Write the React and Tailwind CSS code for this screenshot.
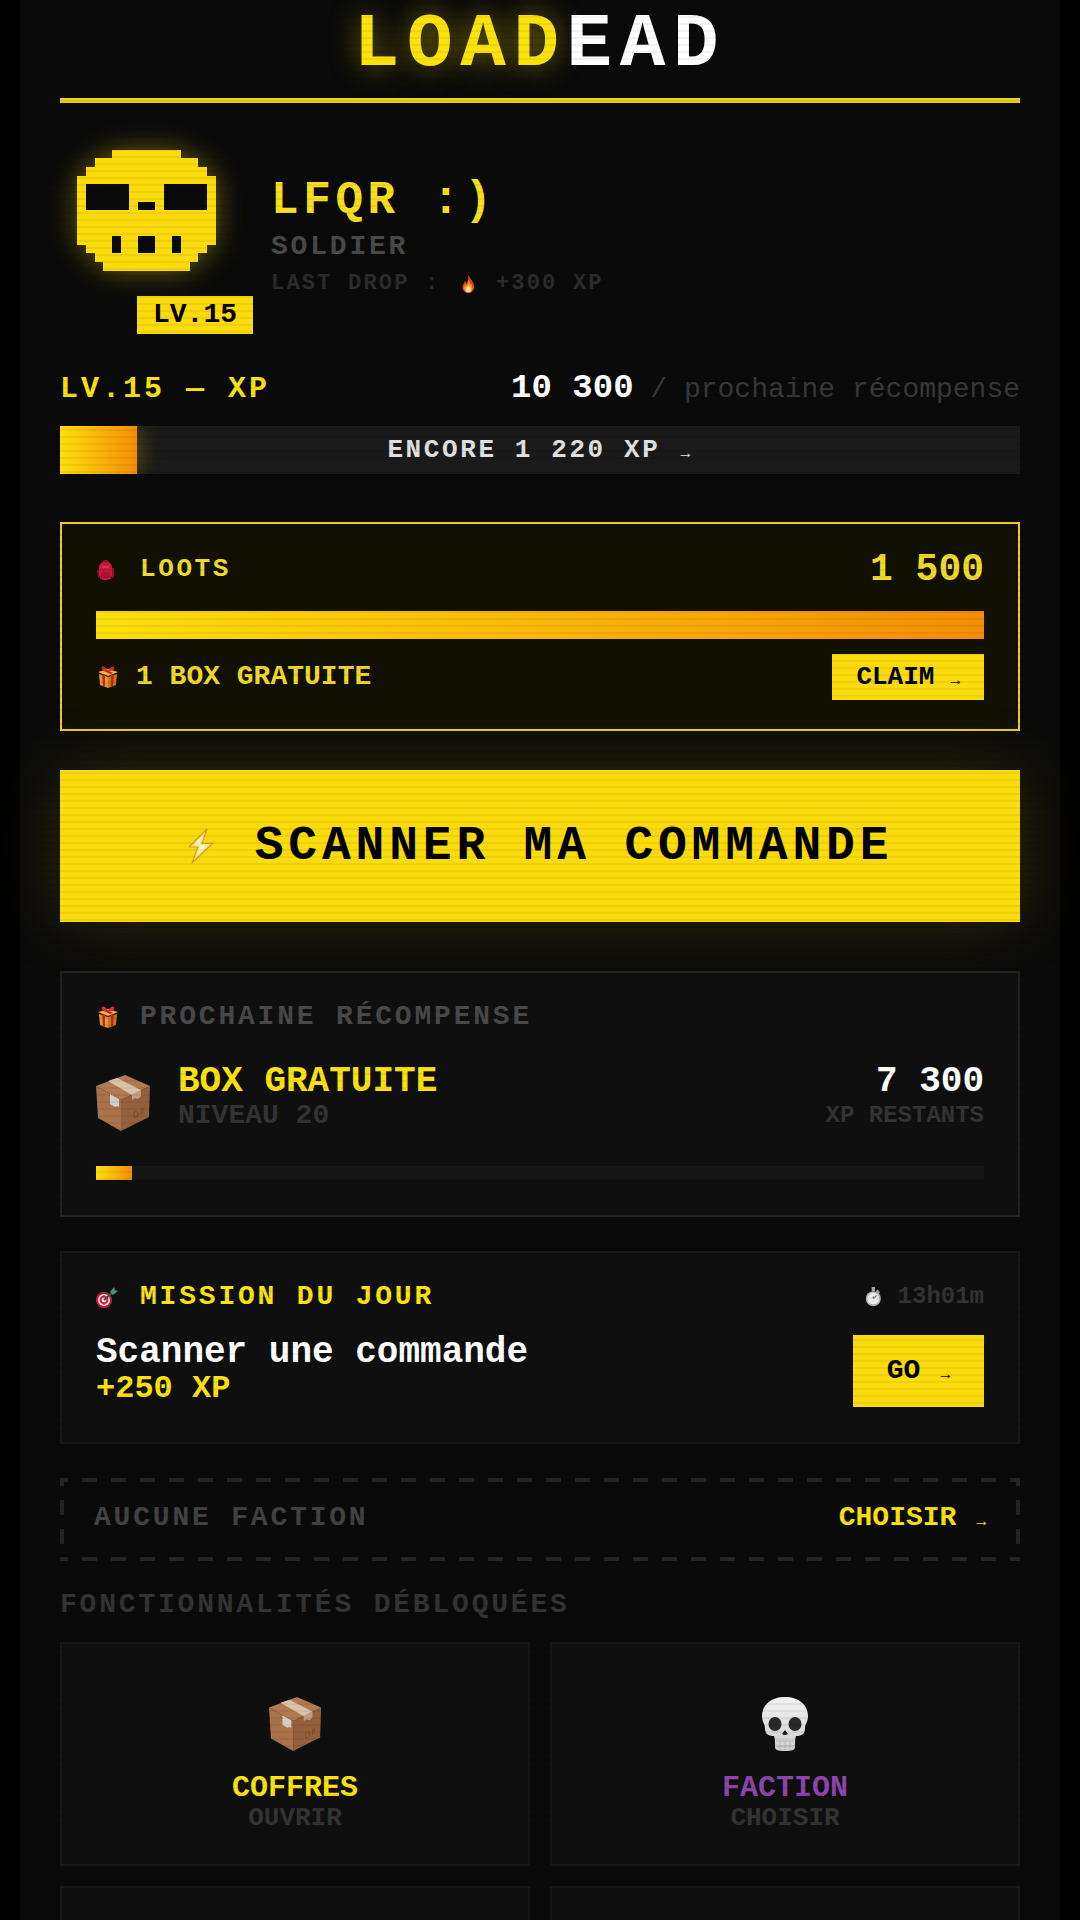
const features = [
    { id: 'coffres', label: 'COFFRES', action: 'OUVRIR', icon: BoxIcon, color: 'text-[#fbe20c]' },
    { id: 'faction', label: 'FACTION', action: 'CHOISIR', icon: SkullIcon, color: 'text-[#8e44ad]' },
];

function PixelSkull() {
    return (
        <svg viewBox="0 0 20 20" className="w-full h-full overflow-visible drop-shadow-[0_0_14px_rgba(250,220,10,0.4)]" shapeRendering="crispEdges" aria-hidden="true">
            <g transform="translate(2 1)">
                <path fill="#fadb0b" d="M4 0h8v1h2v1h1v1h1v8h-1v1h-1v1h-1v1H3v-1H2v-1H1v-1H0V3h1V2h1V1h2z" />
                <path fill="#0a0a0a" d="M1 4h5v3H1zM10 4h5v3h-5zM7 6h2v1H7zM4 10h1v2H4zM7 10h2v2H7zM11 10h1v2h-1z" />
            </g>
        </svg>
    );
}

function FireIcon({ className }) {
    return (
        <svg viewBox="0 0 20 24" className={className} aria-hidden="true">
            <path fill="#e8431c" d="M10 1c1 4 7 8 7 15 0 4-3 7-7 7s-7-3-7-7c0-3 2-5 3-8l2 3c2-3 2-6 2-10z" />
            <path fill="#ff9d1e" d="M10 7c1 4 5 6 5 10 0 3-2 5-5 5s-5-2-5-5c0-2 1-3 2-5l1 2c2-2 2-4 2-7z" />
            <path fill="#fff0b0" d="M10 14c1 2 3 3 3 5s-1 3-3 3-3-1-3-3 2-3 3-5z" />
        </svg>
    );
}

function BagIcon({ className }) {
    return (
        <svg viewBox="0 0 24 24" className={className} aria-hidden="true">
            <path fill="none" stroke="#8f1028" strokeWidth="2" d="M7 7V5a3 3 0 0 1 5 0v2" />
            <rect x="3" y="5" width="13" height="18" rx="5" fill="#c8173a" />
            <path fill="#8f1028" d="M1 13h2v8H2zM16 11h2v10h-2z" />
            <path fill="#a8142f" d="M5 15h9v6H5z" />
            <path fill="#e0304f" d="M6 9h7v2H6z" />
        </svg>
    );
}

function GiftIcon({ className }) {
    return (
        <svg viewBox="0 0 24 24" className={className} aria-hidden="true">
            <path fill="#e09a22" d="M3 9l9 3v11l-8-3z" />
            <path fill="#c47a14" d="M21 9l-9 3v11l8-3z" />
            <path fill="#f1b640" d="M2 7l10-3 10 3-10 4z" />
            <path fill="#c91f2b" d="M6 9l3 1v12l-2-1zM15 10l3-1-1 12-2 1zM6 5l3-1 8 4-3 1z" />
            <path fill="#e02a36" d="M12 6C9 0 4 1 6 4c1 2 4 2 6 2zM12 6c3-6 8-5 6-2-1 2-4 2-6 2z" />
        </svg>
    );
}

function BoltIcon({ className }) {
    return (
        <svg viewBox="0 0 28 36" className={className} aria-hidden="true">
            <path fill="#fbe38a" stroke="#dd9a1c" strokeWidth="1.2" strokeLinejoin="round" d="M20 1L2 19l9 0L5 35l21-20-11 1z" />
            <path fill="#fff6d0" d="M17 6L7 17l7-1-4 11 11-11-9 1z" />
        </svg>
    );
}

function TargetIcon({ className }) {
    return (
        <svg viewBox="0 0 24 24" className={className} aria-hidden="true">
            <circle cx="8" cy="15" r="8" fill="#c9203a" />
            <circle cx="8" cy="15" r="6" fill="#f1dede" />
            <circle cx="8" cy="15" r="4.4" fill="#c9203a" />
            <circle cx="8" cy="15" r="2.4" fill="#f1dede" />
            <path stroke="#3c4a48" strokeWidth="1.8" d="M8 15l9-8" />
            <path fill="#3f9a85" d="M14 7l4-5 1 3 3 1-5 4z" />
        </svg>
    );
}

function TimerIcon({ className }) {
    return (
        <svg viewBox="0 0 20 24" className={className} aria-hidden="true">
            <path fill="#a9a9a9" d="M8 0h4v5H8zM15 3l3 3-2 2-3-3z" />
            <circle cx="10" cy="14" r="9" fill="#b5b5b5" />
            <circle cx="10" cy="14" r="7" fill="#ececec" />
            <path stroke="#777" strokeWidth="1.4" fill="none" d="M10 14l4-4M10 14v-3" />
        </svg>
    );
}

function BoxIcon({ className }) {
    return (
        <svg viewBox="0 0 54 58" className={className} aria-hidden="true">
            <path fill="#a9724a" d="M0 12l25 14v31L2 44z" />
            <path fill="#94603b" d="M54 12L25 26v31l28-14z" />
            <path fill="#b07a52" d="M0 12L29 1l25 11-29 14z" />
            <path fill="#dcc3a8" d="M12 7l9-3 24 12-9 5z" />
            <path fill="#bda085" d="M36 21l9-5v6l-3 3-3-1-3 2z" />
            <path fill="#d6cdc3" d="M14 20l9 5v8l-2-1-2 1-5-3z" />
            <path fill="none" stroke="#7f4c2b" strokeWidth="1" d="M38 44v-5l2-2 2 1v4zM45 40v-5l2-1v5z" />
        </svg>
    );
}

function SkullIcon({ className }) {
    return (
        <svg viewBox="0 0 46 56" className={className} aria-hidden="true">
            <defs>
                <linearGradient id="bone" x1="0" y1="0" x2="0" y2="1">
                    <stop offset="0" stopColor="#f2f2f2" />
                    <stop offset="1" stopColor="#cfcfcf" />
                </linearGradient>
            </defs>
            <path fill="url(#bone)" d="M23 1C9 1 0 9 0 20c0 6 3 8 3 12 0 6 3 8 9 8 1 3 1 6 1 11 0 3 3 4 10 4s10-1 10-4c0-5 0-8 1-11 6 0 9-2 9-8 0-4 3-6 3-12C46 9 37 1 23 1z" />
            <ellipse cx="13" cy="28" rx="6.5" ry="7" fill="#2c2728" />
            <ellipse cx="33" cy="28" rx="6.5" ry="7" fill="#2c2728" />
            <path fill="#1c1818" d="M23 34l3 4-2 1h-2l-2-1z" />
            <path fill="none" stroke="#b4b4b4" strokeWidth="0.8" d="M14 45h18M14 50h18M18 45v8M23 45v9M28 45v8" />
        </svg>
    );
}

function Arrow() {
    return <span className="pt-2 text-base font-normal leading-none">→</span>;
}

function ProgressBar({ value, label, className, fillClassName = '' }) {
    return (
        <div role="progressbar" aria-label={label} aria-valuenow={value} aria-valuemin={0} aria-valuemax={100} className={`overflow-hidden ${className}`}>
            <div
                className={`h-full bg-linear-to-r from-[#fbe00c] to-[#f48c06] ${fillClassName}`}
                style={{ width: `${value}%` }}
            />
        </div>
    );
}

export default function App() {
    return (
        <div className="h-screen overflow-y-auto bg-black font-['Liberation_Mono',monospace] font-bold [scrollbar-width:none]">
            <main className="mx-5 px-10 bg-[#0a0a0a]">
                <header className="pb-2 border-b-[5px] border-[#ead01c] text-center">
                    <h1 className="text-[76px] leading-[90px] tracking-widest text-white">
                        <span className="text-[#fbe20c] [text-shadow:0_0_28px_rgba(250,220,10,0.5)]">LOAD</span>EAD
                    </h1>
                </header>

                <section className="flex gap-[38px] pt-[38px]">
                    <div className="relative shrink-0 size-[173px]">
                        <PixelSkull />
                        <span className="absolute -bottom-5 -right-5 px-4 bg-[#fadb0b] text-black text-[28px] leading-[38px]">LV.15</span>
                    </div>
                    <div className="pt-8">
                        <h2 className="text-[46px] leading-[56px] tracking-widest text-[#f5df1c]">LFQR :)</h2>
                        <p className="text-[28px] leading-9 tracking-widest text-[#484848]">SOLDIER</p>
                        <p className="flex items-center text-[22px] leading-[38px] tracking-widest text-[#2c2c2c] whitespace-pre">
                            LAST DROP : <FireIcon className="h-5 mx-1" /> +300 XP
                        </p>
                    </div>
                </section>

                <section className="pt-[54px]">
                    <div className="flex justify-between items-baseline leading-10">
                        <span className="text-[30px] tracking-widest text-[#fbe20c]">LV.15 — XP</span>
                        <span className="text-[28px] font-normal text-[#383838]">
                            <strong className="text-[34px] font-bold text-white">10 300</strong> / prochaine récompense
                        </span>
                    </div>
                    <div className="relative mt-4">
                        <ProgressBar
                            value={8}
                            label="XP"
                            className="h-12 bg-[#1a1a1a]"
                            fillClassName="shadow-[0_0_24px_rgba(250,220,10,0.35)]"
                        />
                        <p className="absolute inset-0 flex items-center justify-center gap-5 text-[26px] tracking-widest text-[#e0e0e0]">
                            ENCORE 1 220 XP <Arrow />
                        </p>
                    </div>
                </section>

                <section className="mt-12 px-[34px] py-[29px] border-2 border-[#ead01c] bg-[#121002]">
                    <div className="flex items-center justify-between h-8 text-[#f0da28]">
                        <h3 className="flex items-center gap-5 text-[26px] tracking-widest">
                            <BagIcon className="size-6" />LOOTS
                        </h3>
                        <span className="text-[38px]">1 500</span>
                    </div>
                    <ProgressBar value={100} label="Loots" className="mt-[26px] h-7" />
                    <div className="flex items-center justify-between mt-[15px]">
                        <p className="flex items-center gap-4 text-[28px] text-[#f0da28]">
                            <GiftIcon className="size-6" />1 BOX GRATUITE
                        </p>
                        <button type="button" className="flex items-center gap-4 h-[46px] px-6 bg-[#fadb0b] text-black text-[26px] cursor-pointer">
                            CLAIM <Arrow />
                        </button>
                    </div>
                </section>

                <button
                    type="button"
                    className="flex items-center justify-center gap-10 w-full h-[152px] mt-[39px] bg-[#fadb0b] text-black text-[48px] tracking-widest shadow-[0_0_70px_rgba(250,220,10,0.16)] cursor-pointer"
                >
                    <BoltIcon className="h-9" />SCANNER MA COMMANDE
                </button>

                <section className="mt-[49px] px-[34px] pt-7 pb-[35px] border-2 border-[#222222] bg-[#0f0f0f]">
                    <h3 className="flex items-center gap-5 h-8 text-[28px] tracking-widest text-[#484848]">
                        <GiftIcon className="size-6" />PROCHAINE RÉCOMPENSE
                    </h3>
                    <div className="flex items-end justify-between mt-[31px]">
                        <div className="flex items-end gap-7">
                            <BoxIcon className="h-[58px]" />
                            <div>
                                <p className="text-4xl leading-9 text-[#fbe20c]">BOX GRATUITE</p>
                                <p className="text-[28px] leading-8 text-[#333333]">NIVEAU 20</p>
                            </div>
                        </div>
                        <div className="text-right">
                            <p className="text-4xl leading-9 text-white">7 300</p>
                            <p className="text-2xl leading-8 text-[#333333]">XP RESTANTS</p>
                        </div>
                    </div>
                    <ProgressBar value={4} label="Prochaine récompense" className="mt-[34px] h-[14px] bg-[#171717]" />
                </section>

                <section className="mt-[34px] px-[34px] pt-7 pb-[35px] border-2 border-[#191919] bg-[#0f0f0f]">
                    <div className="flex items-center justify-between h-8">
                        <h3 className="flex items-center gap-5 text-[28px] tracking-widest text-[#fbe20c]">
                            <TargetIcon className="size-6" />MISSION DU JOUR
                        </h3>
                        <span className="flex items-center gap-4 text-2xl text-[#333333]">
                            <TimerIcon className="h-5" />13h01m
                        </span>
                    </div>
                    <div className="flex items-center justify-between mt-[22px]">
                        <div>
                            <p className="text-4xl leading-9 text-white">Scanner une commande</p>
                            <p className="text-[32px] leading-9 text-[#fbe20c]">+250 XP</p>
                        </div>
                        <button type="button" className="flex items-center gap-5 h-[72px] px-[34px] bg-[#fadb0b] text-black text-[28px] cursor-pointer">
                            GO <Arrow />
                        </button>
                    </div>
                </section>

                <section className="relative flex items-center justify-between h-[83px] mt-[34px] px-[34px] pb-1">
                    <svg className="absolute inset-0 w-full h-full" stroke="#252525" strokeWidth="8" strokeDasharray="15 14" strokeDashoffset="7" aria-hidden="true">
                        <line x1="0" y1="0" x2="100%" y2="0" />
                        <line x1="0" y1="100%" x2="100%" y2="100%" />
                        <line x1="0" y1="0" x2="0" y2="100%" />
                        <line x1="100%" y1="0" x2="100%" y2="100%" />
                    </svg>
                    <p className="text-[28px] tracking-widest text-[#424242]">AUCUNE FACTION</p>
                    <button type="button" className="relative flex items-center gap-5 text-[28px] text-[#fbe20c] cursor-pointer">
                        CHOISIR <Arrow />
                    </button>
                </section>

                <h3 className="mt-[26px] mb-[19px] text-[28px] leading-9 tracking-widest text-[#333333]">
                    FONCTIONNALITÉS DÉBLOQUÉES
                </h3>
                <div className="grid grid-cols-2 gap-5">
                    {features.map(({ id, label, action, icon: Icon, color }) => (
                        <button key={id} type="button" className="flex flex-col items-center pt-[52px] pb-8 border-2 border-[#191919] bg-[#0f0f0f] cursor-pointer">
                            <Icon className="h-14" />
                            <span className={`mt-5 text-[30px] leading-8 ${color}`}>{label}</span>
                            <span className="text-[26px] leading-7 text-[#333333]">{action}</span>
                        </button>
                    ))}
                    <div className="h-56 border-2 border-[#191919] bg-[#0f0f0f]" />
                    <div className="h-56 border-2 border-[#191919] bg-[#0f0f0f]" />
                </div>
            </main>

            {/* CRT scanlines */}
            <div className="fixed inset-0 pointer-events-none bg-[repeating-linear-gradient(0deg,transparent_0_5px,rgba(0,0,0,0.05)_5px_7px)]" />
        </div>
    );
}
